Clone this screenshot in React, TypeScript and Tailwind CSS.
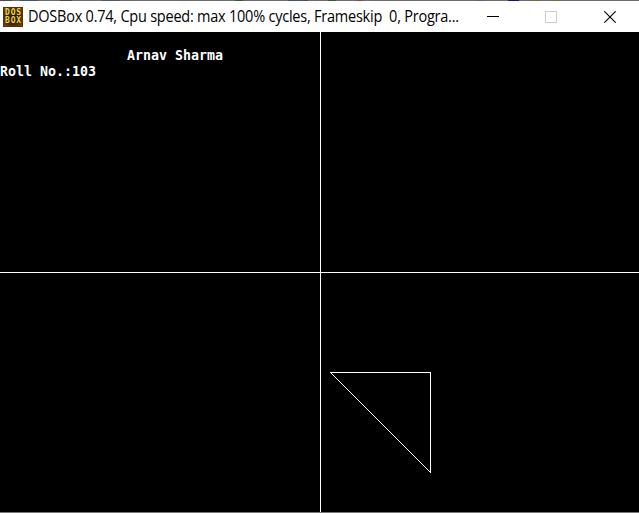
function DosBoxIcon() {
  return (
    <div className="flex h-5 w-5 shrink-0 flex-col items-center justify-center border border-[#5c2f06] bg-[radial-gradient(#1c0d02,#4a2506_60%,#7a470c)] pt-px font-['DejaVu_Sans_Mono',monospace] text-[8px] leading-[8px] font-bold tracking-[0.8px] text-[#e6d838]">
      <span className="pl-px">DOS</span>
      <span className="pl-px">BOX</span>
    </div>
  );
}

function TitleBar() {
  return (
    <header className="flex h-[31px] items-center bg-white pl-[3px]">
      <DosBoxIcon />
      <h1 className="ml-[5px] w-[440px] origin-left scale-x-[0.936] pb-px font-['Open_Sans',sans-serif] text-[15.5px] leading-5 font-normal tracking-[-0.25px] whitespace-pre text-black">
        {'DOSBox 0.74, Cpu speed: max 100% cycles, Frameskip  0, Progra...'}
      </h1>
      <div className="ml-[19px] flex items-center">
        <svg width="12" height="12" shapeRendering="crispEdges" aria-label="Minimize">
          <rect y="5" width="12" height="1" fill="#000" />
        </svg>
        <svg className="ml-[46px]" width="12" height="12" shapeRendering="crispEdges" aria-label="Maximize">
          <rect x="0.5" y="0.5" width="11" height="11" fill="none" stroke="#ccc" />
        </svg>
        <svg className="ml-[47px]" width="12" height="12" aria-label="Close">
          <path d="M0.3 0.3 11.7 11.7M11.7 0.3 0.3 11.7" stroke="#000" strokeWidth="1.1" />
        </svg>
      </div>
    </header>
  );
}

function Screen() {
  return (
    <main className="grid h-[480px] grid-cols-[320px_1fr] grid-rows-[240px_1fr] bg-black">
      <section className="pt-4 font-['DejaVu_Sans_Mono',monospace] text-[13.29px] leading-4 font-bold text-white">
        <p className="pl-[127px]">Arnav Sharma</p>
        <p>Roll No.:103</p>
      </section>
      <section className="border-l border-white" />
      <section className="border-t border-white" />
      <section className="border-t border-l border-white">
        <svg className="mt-[99px] ml-[9px]" width="101" height="101" shapeRendering="crispEdges">
          <path d="M0.5 0.5H100.5V100.5Z" fill="none" stroke="#fff" />
        </svg>
      </section>
    </main>
  );
}

function TopEdge() {
  return (
    <div className="flex h-px bg-[#6e6c6e]">
      <span className="w-3 bg-[#4c4a4c]" />
      <span className="ml-2 w-[18px] bg-[#44506c]" />
      <span className="ml-[22px] w-3 bg-[#4c4a4c]" />
      <span className="ml-[30px] w-[18px] bg-[#4c5870]" />
      <span className="ml-[115px] w-2 bg-[#345c2c]" />
      <span className="ml-[45px] w-5 bg-[#44506c]" />
      <span className="ml-[20px] w-2 bg-[#345c2c]" />
      <span className="ml-[20px] w-[7px] bg-[#8c4844]" />
      <span className="ml-[113px] w-[10px] bg-[#50688c]" />
      <span className="ml-[22px] w-[11px] bg-[#1c147c]" />
      <span className="ml-[11px] w-[10px] bg-[#74683c]" />
      <span className="ml-[13px] w-2 bg-[#74683c]" />
    </div>
  );
}

export default function App() {
  return (
    <div className="h-[513px] w-[639px] overflow-hidden bg-black">
      <TopEdge />
      <TitleBar />
      <Screen />
      <div className="h-px bg-[#777]" />
    </div>
  );
}
